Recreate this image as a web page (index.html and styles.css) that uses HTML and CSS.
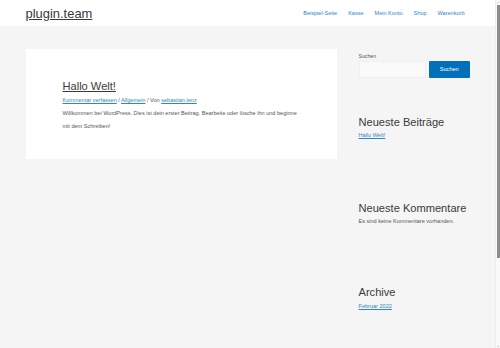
FILE: index.html
```html
<!DOCTYPE html>
<html lang="de">
<head>
<meta charset="utf-8">
<title>plugin.team</title>
<link rel="stylesheet" href="styles.css">
</head>
<body>
<div class="page">
  <header class="site-header">
    <div class="container header-inner">
      <a class="logo" href="#">plugin.team</a>
      <nav class="menu">
        <a href="#">Beispiel-Seite</a>
        <a href="#">Kasse</a>
        <a href="#">Mein Konto</a>
        <a href="#">Shop</a>
        <a href="#">Warenkorb</a>
      </nav>
    </div>
  </header>
  <div class="site-content">
    <div class="container content-grid">
      <main class="primary">
        <article class="card">
          <h2 class="entry-title"><a href="#">Hallo Welt!</a></h2>
          <div class="entry-meta"><a href="#">Kommentar verfassen</a> / <a href="#">Allgemein</a> / Von <a href="#">sebastian.lenz</a></div>
          <p class="entry-text">Willkommen bei WordPress. Dies ist dein erster Beitrag. Bearbeite oder lösche ihn und beginne mit dem Schreiben!</p>
        </article>
      </main>
      <aside class="sidebar">
        <div class="widget search-widget">
          <label class="search-label">Suchen</label>
          <div class="search-row">
            <input class="search-input" type="text">
            <button class="search-button">Suchen</button>
          </div>
        </div>
        <div class="widget w-recent">
          <h2 class="widget-title">Neueste Beiträge</h2>
          <a class="widget-link" href="#">Hallo Welt!</a>
        </div>
        <div class="widget w-comments">
          <h2 class="widget-title">Neueste Kommentare</h2>
          <div class="widget-text">Es sind keine Kommentare vorhanden.</div>
        </div>
        <div class="widget w-archive">
          <h2 class="widget-title">Archive</h2>
          <a class="widget-link" href="#">Februar 2022</a>
        </div>
      </aside>
    </div>
  </div>
</div>
<div class="scrollbar">
  <span class="sb-arrow sb-up"></span>
  <span class="sb-thumb"></span>
  <span class="sb-arrow sb-down"></span>
</div>
</body>
</html>
```

FILE: styles.css
```css
html, body {
  margin: 0;
  padding: 0;
}
body {
  background: #f5f5f5;
  font-family: "Liberation Sans", Arial, sans-serif;
  color: #555555;
  font-size: 5.55px;
  overflow: hidden;
}
.page {
  padding-right: 5px;
  height: 348px;
}
a {
  color: #2f86c6;
}
.container {
  width: 444px;
  margin: 0 auto;
}
.site-header {
  background: #ffffff;
  height: 26px;
}
.header-inner {
  height: 26px;
  display: flex;
  align-items: center;
  justify-content: space-between;
}
.logo {
  color: #3a3a3a;
  font-size: 12.95px;
  line-height: 15px;
  text-decoration: underline;
  margin-top: 1px;
}
.menu {
  display: flex;
  margin-right: -0.5px;
}
.menu a {
  padding: 0 5.5px;
  text-decoration: none;
  line-height: 10px;
  font-size: 5.55px;
}
.site-content {
  padding-top: 23px;
}
.content-grid {
  display: flex;
  align-items: flex-start;
}
.primary {
  width: 311px;
  flex: none;
}
.card {
  background: #ffffff;
  padding: 31px 37px 26.5px 37px;
}
.entry-title {
  margin: 0;
  font-size: 11.1px;
  line-height: 13px;
  font-weight: normal;
}
.entry-title a {
  color: #3a3a3a;
  text-decoration: underline;
}
.entry-meta {
  margin-top: 1.8px;
  line-height: 10px;
  font-size: 5.55px;
}
.entry-text {
  margin: 2.7px 0 0 0;
  line-height: 12.5px;
}
.sidebar {
  width: 133px;
  flex: none;
  padding-left: 22px;
  box-sizing: border-box;
}
.search-label {
  display: block;
  margin-top: 1.5px;
  line-height: 10px;
  font-size: 5.2px;
}
.search-row {
  display: flex;
  gap: 3px;
  height: 17px;
}
.search-input {
  width: 67.5px;
  flex: none;
  box-sizing: border-box;
  margin: 0;
  padding: 0;
  background: #fafafa;
  border: 1px solid #f0f0f0;
  border-radius: 1px;
  outline: none;
}
.search-button {
  flex: 1;
  margin: 0;
  padding: 0;
  border: none;
  border-radius: 1px;
  background: #0170b9;
  color: #ffffff;
  font-family: "Liberation Sans", Arial, sans-serif;
  font-size: 5.55px;
}
.widget-title {
  margin: 0;
  font-size: 11.1px;
  line-height: 13px;
  font-weight: normal;
  color: #3a3a3a;
}
.widget-link, .widget-text {
  display: block;
  line-height: 10px;
  font-size: 5.55px;
}
.w-recent {
  margin-top: 38.5px;
}
.w-recent .widget-link {
  margin-top: 1px;
}
.w-comments {
  margin-top: 62px;
}
.w-comments .widget-text {
  margin-top: 0.5px;
}
.w-archive {
  margin-top: 60.5px;
}
.w-archive .widget-link {
  margin-top: 1.5px;
}
.scrollbar {
  position: fixed;
  top: 0;
  right: 0;
  width: 5px;
  height: 348px;
  background: #f9f9f9;
  border-left: 1px solid #ededed;
  box-sizing: border-box;
  display: flex;
  flex-direction: column;
  align-items: center;
}
.sb-arrow {
  width: 0;
  height: 0;
  border-left: 1.5px solid transparent;
  border-right: 1.5px solid transparent;
}
.sb-up {
  margin-top: 1.5px;
  border-bottom: 1.5px solid #a0a0a0;
}
.sb-down {
  margin-top: auto;
  margin-bottom: 1.5px;
  border-top: 1.5px solid #a0a0a0;
}
.sb-thumb {
  margin-top: 2px;
  width: 3px;
  height: 253px;
  background: #8c8c8c;
}
```
